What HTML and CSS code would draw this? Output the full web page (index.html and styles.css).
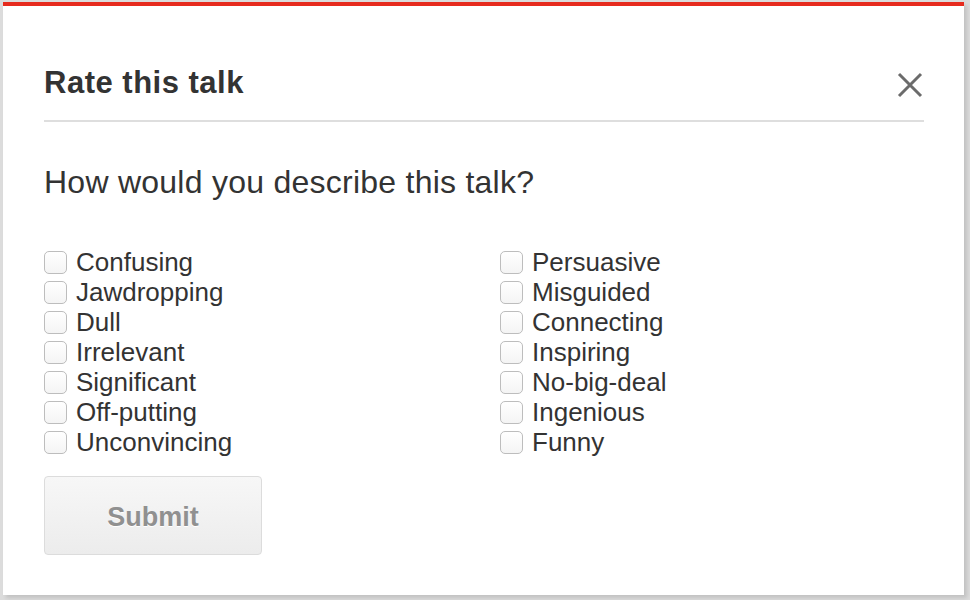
FILE: index.html
```html
<!DOCTYPE html>
<html>
<head>
<meta charset="utf-8">
<link rel="stylesheet" href="styles.css">
</head>
<body>
<div class="modal">
  <div class="header">
    <h2 class="title">Rate this talk</h2>
    <button class="close" aria-label="Close">
      <svg width="26" height="26" viewBox="0 0 26 26"><path d="M2 2 L24 24 M24 2 L2 24" stroke="#6b6b6b" stroke-width="3" fill="none"/></svg>
    </button>
  </div>
  <p class="question">How would you describe this talk?</p>
  <div class="options">
    <div class="col">
      <label class="opt"><span class="box"></span>Confusing</label>
      <label class="opt"><span class="box"></span>Jawdropping</label>
      <label class="opt"><span class="box"></span>Dull</label>
      <label class="opt"><span class="box"></span>Irrelevant</label>
      <label class="opt"><span class="box"></span>Significant</label>
      <label class="opt"><span class="box"></span>Off-putting</label>
      <label class="opt"><span class="box"></span>Unconvincing</label>
    </div>
    <div class="col">
      <label class="opt"><span class="box"></span>Persuasive</label>
      <label class="opt"><span class="box"></span>Misguided</label>
      <label class="opt"><span class="box"></span>Connecting</label>
      <label class="opt"><span class="box"></span>Inspiring</label>
      <label class="opt"><span class="box"></span>No-big-deal</label>
      <label class="opt"><span class="box"></span>Ingenious</label>
      <label class="opt"><span class="box"></span>Funny</label>
    </div>
  </div>
  <button class="submit">Submit</button>
</div>
</body>
</html>
```
FILE: styles.css
```css
html, body {
  margin: 0;
  padding: 0;
}
body {
  background: #dcdcdc;
  font-family: "Liberation Sans", Arial, sans-serif;
  color: #333;
  width: 970px;
  height: 600px;
  overflow: hidden;
}
.modal {
  box-sizing: border-box;
  margin: 2px 0 0 3px;
  width: 961px;
  height: 593px;
  background: #fff;
  border-top: 4px solid #e62b1e;
  padding: 0 40px 0 41px;
  box-shadow: 3px 3px 4px rgba(0,0,0,0.12);
}
.header {
  display: flex;
  align-items: center;
  justify-content: space-between;
  border-bottom: 2px solid #dedede;
  padding: 60px 0 20px 0;
}
.title {
  margin: 0;
  font-size: 31px;
  letter-spacing: 0.5px;
  font-weight: bold;
  line-height: 34px;
  color: #333;
}
.close {
  border: 0;
  background: none;
  padding: 0;
  margin: 3px 1px 0 0;
  width: 26px;
  height: 26px;
  display: block;
}
.close svg { display: block; }
.question {
  margin: 41px 0 0 0;
  font-size: 32px;
  letter-spacing: 0.25px;
  line-height: 38px;
  color: #333;
}
.options {
  display: grid;
  grid-template-columns: 456px 1fr;
  margin-top: 46px;
}
.col {
  display: flex;
  flex-direction: column;
}
.opt {
  display: flex;
  align-items: center;
  height: 30px;
  font-size: 26px;
  color: #333;
}
.box {
  box-sizing: border-box;
  width: 23px;
  height: 23px;
  border: 1px solid #bdbdbd;
  border-radius: 5px;
  background: linear-gradient(#fff, #f4f4f4);
  margin-right: 9px;
  flex: none;
}
.submit {
  display: block;
  margin-top: 19px;
  width: 218px;
  height: 79px;
  border: 1px solid #dcdcdc;
  border-radius: 4px;
  background: linear-gradient(#f7f7f7, #ececec);
  font-family: "Liberation Sans", Arial, sans-serif;
  font-weight: bold;
  font-size: 27px;
  color: #909090;
  text-shadow: 0 1px 0 #fff;
  padding: 4px 0 0 0;
}
```
